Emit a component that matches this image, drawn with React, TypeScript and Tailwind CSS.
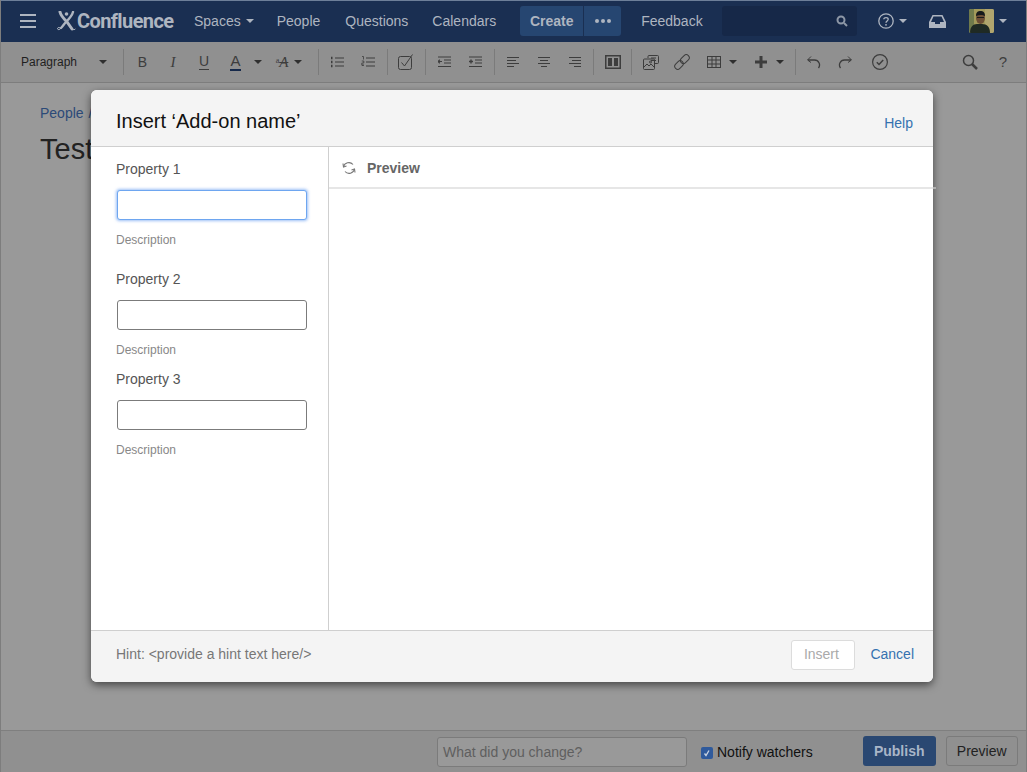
import type { ReactNode } from 'react';

const Caret = ({ className = 'border-t-[#2f2f2f]' }: { className?: string }) => (
  <span className={`inline-block h-0 w-0 border-x-[4px] border-t-[4px] border-x-transparent ${className}`} />
);

const Sep = () => <span className="h-[26px] w-px shrink-0 bg-[#7b7b7b]" />;

// fixed-width toolbar slot, icon centred
const Slot = ({ w, children }: { w: string; children: ReactNode }) => (
  <span className={`flex shrink-0 items-center justify-center ${w}`}>{children}</span>
);

const Ico = ({ children, w = 16, h = 16 }: { children: ReactNode; w?: number; h?: number }) => (
  <svg width={w} height={h} viewBox={`0 0 ${w} ${h}`} fill="none" stroke="#3d3d3d" strokeWidth="1">
    {children}
  </svg>
);

const Lines = ({ rows }: { rows: [number, number][] }) => (
  <Ico w={14} h={12}>
    {rows.map(([a, b], i) => (
      <path key={i} d={`M${a} ${1.5 + i * 3}H${b}`} />
    ))}
  </Ico>
);

function Logo() {
  return (
    <svg width="19" height="20" viewBox="0 0 19 20" fill="none" stroke="#aeb5c0" strokeLinecap="round">
      <path d="M3 1c1 4 4 7 7 10l5 7" strokeWidth="3" />
      <path d="M16 1c-1 4-4 7-7 10-2 2-3 4-5 6" strokeWidth="2.4" />
      <circle cx="9.5" cy="3" r="1.8" fill="#aeb5c0" stroke="none" />
      <path d="M4 17c-1 2-3 2-3.500 1s1-2 2-1.500M15 18c1 1 3 1 3.500 0" strokeWidth="1" />
    </svg>
  );
}

function Avatar() {
  return (
    <svg width="25" height="24" viewBox="0 0 25 24" className="rounded-[2px]">
      <rect width="25" height="24" fill="#a39a5a" />
      <rect x="16" width="9" height="24" fill="#b0a56e" />
      <rect width="5" height="24" fill="#6f7a4c" />
      <path d="M1 24c0-6 3-9 7-9h5c5 0 8 3 8 9z" fill="#1f2a24" />
      <ellipse cx="11.500" cy="9" rx="4.500" ry="6" fill="#6d4f36" />
      <path d="M7 7c0-4 2-5 4.500-5S16 3 16 7c-2-1.500-6-1.500-9 0z" fill="#16191c" />
      <path d="M8 8.500h7" stroke="#1c1c1c" strokeWidth="1" />
    </svg>
  );
}

function TopNav() {
  return (
    <div className="flex h-[42px] shrink-0 items-center border-t border-t-[#6d7f99] bg-[#1a2f52] pb-[1px] text-[14px] text-[#aeb5c0]">
      <span className="ml-[19px] flex w-[16px] flex-col gap-[4px]">
        <span className="h-[2px] bg-[#aeb5c0]" />
        <span className="h-[2px] bg-[#aeb5c0]" />
        <span className="h-[2px] bg-[#aeb5c0]" />
      </span>
      <span className="ml-[21px] flex items-center">
        <Logo />
        <span className="ml-[1px] w-[98px] font-['Roboto',sans-serif] text-[20px] font-bold leading-none tracking-[-0.6px]">Confluence</span>
      </span>
      <span className="ml-[19px] flex items-center gap-[5px]">
        Spaces <Caret className="border-t-[#aeb5c0]" />
      </span>
      <span className="ml-[23px]">People</span>
      <span className="ml-[25px]">Questions</span>
      <span className="ml-[24px]">Calendars</span>
      <span className="ml-[24px] flex h-[30px] items-stretch overflow-hidden rounded-[3px] bg-[#264671]">
        <span className="flex w-[64px] items-center justify-center border-r border-r-[#1a2f52] font-semibold">Create</span>
        <span className="flex w-[37px] items-center justify-center gap-[2px]">
          <span className="h-[4px] w-[4px] rounded-full bg-[#aeb5c0]" />
          <span className="h-[4px] w-[4px] rounded-full bg-[#aeb5c0]" />
          <span className="h-[4px] w-[4px] rounded-full bg-[#aeb5c0]" />
        </span>
      </span>
      <span className="ml-[20px]">Feedback</span>
      <span className="ml-[19px] flex h-[30px] w-[135px] items-center justify-end rounded-[3px] bg-[#162848] pr-[9px]">
        <svg width="12" height="12" viewBox="0 0 12 12" fill="none" stroke="#8d97a6" strokeWidth="2">
          <circle cx="5" cy="5" r="3.500" />
          <path d="M8 8l3 3" />
        </svg>
      </span>
      <span className="ml-[21px] flex items-center gap-[5px]">
        <svg width="16" height="16" viewBox="0 0 16 16" fill="none" stroke="#aeb5c0" strokeWidth="1.300">
          <circle cx="8" cy="8" r="7.200" />
          <path d="M5.800 6.300C5.800 4 10.200 4 10.200 6.300c0 1.700-2.200 1.600-2.200 3.400" />
          <circle cx="8" cy="11.800" r=".9" fill="#aeb5c0" stroke="none" />
        </svg>
        <Caret className="border-t-[#aeb5c0]" />
      </span>
      <span className="ml-[22px] flex">
        <svg width="17" height="13" viewBox="0 0 17 13">
          <path d="M3.500 0h10L17 7v6H0V7zM4.500 1.500 2 7h4v2h5V7h4l-2.500-5.500z" fill="#aeb5c0" fillRule="evenodd" />
        </svg>
      </span>
      <span className="ml-[23px] flex items-center gap-[5px]">
        <Avatar />
        <Caret className="border-t-[#aeb5c0]" />
      </span>
    </div>
  );
}

function Toolbar() {
  return (
    <div className="flex h-[41px] shrink-0 items-center border-b border-b-[#7d7d7d] bg-[#909090] text-[#3d3d3d]">
      <span className="ml-[20px] w-[76px] text-[12px] text-[#1f1f1f]">Paragraph</span>
      <Slot w="w-[12px]"><Caret /></Slot>
      <span className="w-[14px]" />
      <Sep />
      <span className="w-[3px]" />
      <Slot w="w-[31px]"><span className="text-[14px]">B</span></Slot>
      <Slot w="w-[30px]"><span className="font-['Liberation_Serif',serif] text-[15px] italic">I</span></Slot>
      <Slot w="w-[32px]"><span className="border-b border-b-[#3d3d3d] text-[14px] leading-[15px]">U</span></Slot>
      <Slot w="w-[31px]"><span className="border-b-[2px] border-b-[#16294a] text-[15px] leading-[16px]">A</span></Slot>
      <Slot w="w-[14px]"><Caret /></Slot>
      <Slot w="w-[30px]">
        <span className="relative left-[2px] font-['Liberation_Serif',serif] text-[15px] italic"><sup className="text-[8px] not-italic">a</sup><span className="line-through">A</span></span>
      </Slot>
      <Slot w="w-[5px]"><Caret /></Slot>
      <span className="w-[18px]" />
      <Sep />
      <Slot w="w-[36px]">
        <Ico w={14} h={12}>
          <path d="M5 2h9M5 6h9M5 10h9" />
          <path d="M1 2h1.500M1 6h1.500M1 10h1.500" strokeWidth="2.400" />
        </Ico>
      </Slot>
      <Slot w="w-[26px]">
        <Ico w={14} h={12}>
          <path d="M5 2h9M5 6h9M5 10h9" />
          <path d="M1 .5h1.500v3M.8 5h2v2h-2v2h2.200M.8 9.500h2" strokeWidth=".8" />
        </Ico>
      </Slot>
      <span className="w-[6px]" />
      <Sep />
      <Slot w="w-[36px]">
        <Ico>
          <rect x=".5" y="2.500" width="13" height="13" rx="2" />
          <path d="M3.500 8.500l3 3.500L14.500.5" />
        </Ico>
      </Slot>
      <span className="w-[1px]" />
      <Sep />
      <span className="w-[3px]" />
      <Slot w="w-[31px]">
        <Ico w={13} h={12}>
          <path d="M0 1h13M6 4h7M6 7h7M0 10.500h13" />
          <path d="M0 5.500h4M1.800 3.800 0 5.500l1.800 1.700" strokeWidth="1.200" />
        </Ico>
      </Slot>
      <Slot w="w-[31px]">
        <Ico w={13} h={12}>
          <path d="M0 1h13M6 4h7M6 7h7M0 10.500h13" />
          <path d="M0 5.500h4M2 3.500v4" strokeWidth="1.400" />
        </Ico>
      </Slot>
      <span className="w-[3px]" />
      <Sep />
      <span className="w-[2px]" />
      <Slot w="w-[31px]"><Lines rows={[[1, 13], [1, 10], [1, 13], [1, 8]]} /></Slot>
      <Slot w="w-[31px]"><Lines rows={[[1, 13], [3, 11], [1, 13], [4, 10]]} /></Slot>
      <Slot w="w-[31px]"><Lines rows={[[1, 13], [4, 13], [1, 13], [6, 13]]} /></Slot>
      <span className="w-[3px]" />
      <Sep />
      <Slot w="w-[37px]">
        <svg width="16" height="14" viewBox="0 0 16 14">
          <rect x=".75" y=".75" width="14.500" height="12.500" fill="none" stroke="#3d3d3d" strokeWidth="1.500" />
          <rect x="3" y="3" width="4" height="8" fill="#3d3d3d" />
          <rect x="9" y="3" width="4" height="8" fill="#3d3d3d" />
        </svg>
      </Slot>
      <Sep />
      <Slot w="w-[38px]">
        <Ico w={16} h={16}>
          <path d="M5 4V2.500a1 1 0 0 1 1-1h8.500a1 1 0 0 1 1 1v6a1 1 0 0 1-1 1H12M8 4h5M8 6.500h5" />
          <rect x=".5" y="5" width="11" height="10.500" rx="1" />
          <path d="M1 13l3-3 2 2 2-2 3 3" />
          <circle cx="7.500" cy="8" r="1" />
        </Ico>
      </Slot>
      <Slot w="w-[24px]">
        <Ico>
          <g transform="rotate(-45 8 8)">
            <rect x="-1" y="5" width="9.500" height="6" rx="3" />
            <rect x="7" y="5" width="10" height="6" rx="3" />
          </g>
        </Ico>
      </Slot>
      <span className="w-[2px]" />
      <Slot w="w-[35px]">
        <Ico w={14} h={12}>
          <rect x=".5" y=".5" width="13" height="11" />
          <path d="M.5 4h13M.5 8h13M5 .5v11M9 .5v11" />
        </Ico>
      </Slot>
      <span className="w-[2px]" />
      <Slot w="w-[0px]"><Caret /></Slot>
      <span className="w-[13px]" />
      <Slot w="w-[30px]">
        <svg width="12" height="12" viewBox="0 0 12 12"><path d="M4.500 0h3v4.500H12v3H7.500V12h-3V7.500H0v-3h4.500z" fill="#3d3d3d" /></svg>
      </Slot>
      <Slot w="w-[8px]"><Caret /></Slot>
      <span className="w-[11px]" />
      <Sep />
      <Slot w="w-[35px]">
        <Ico w={15} h={14}>
          <path d="M5 1.500L1.500 5 5 7.500" />
          <path d="M2 5h6.500a5 5 0 0 1 4 8" strokeWidth="1.300" />
        </Ico>
      </Slot>
      <span className="w-[2px]" />
      <Slot w="w-[25px]">
        <Ico w={15} h={14}>
          <path d="M10 1.500L13.500 5 10 7.500" />
          <path d="M13 5H6.500a5 5 0 0 0-4 8" strokeWidth="1.300" />
        </Ico>
      </Slot>
      <span className="w-[9px]" />
      <Slot w="w-[25px]">
        <Ico>
          <circle cx="8" cy="8" r="7.400" strokeWidth="1.200" />
          <path d="M4.800 8.300l2.200 2.200 4.200-4.500" strokeWidth="1.500" />
        </Ico>
      </Slot>
      <span className="w-[63px]" />
      <Slot w="w-[30px]">
        <Ico>
          <circle cx="6.500" cy="6.500" r="5" strokeWidth="1.500" />
          <path d="M10 10l5 5" strokeWidth="2.500" />
        </Ico>
      </Slot>
      <Slot w="w-[36px]"><span className="text-[15px]">?</span></Slot>
    </div>
  );
}

function Property({ label, focused, mt }: { label: string; focused?: boolean; mt: string }) {
  return (
    <div className={mt}>
      <div className="text-[14px] leading-[20px] text-[#555]">{label}</div>
      <div
        className={
          focused
            ? 'mt-[11px] ml-[1px] h-[30px] w-[190px] rounded-[3px] border border-[#6ea6f0] bg-white shadow-[0_0_3px_1px_rgba(90,150,240,0.6)]'
            : 'mt-[11px] ml-[1px] h-[30px] w-[190px] rounded-[3px] border border-[#7b7b7b] bg-white'
        }
      />
      <div className="mt-[11px] text-[12px] leading-[18px] text-[#888]">Description</div>
    </div>
  );
}

function Dialog() {
  return (
    <div className="absolute left-[90px] top-[90px] flex h-[592px] w-[842px] flex-col rounded-[6px] bg-white shadow-[0_3px_8px_rgba(0,0,0,0.55)]">
      <div className="flex h-[57px] shrink-0 items-center justify-between rounded-t-[6px] border-b border-b-[#cfcfcf] bg-[#f4f4f4] pl-[25px] pr-[20px]">
        <h2 className="relative top-[3px] text-[20px] text-[#111]">Insert ‘Add-on name’</h2>
        <a className="relative top-[5px] text-[14px] text-[#3572b0]">Help</a>
      </div>
      <div className="flex min-h-0 flex-1">
        <div className="w-[238px] shrink-0 border-r border-r-[#cfcfcf] pl-[25px] pt-[12px]">
          <Property label="Property 1" focused mt="mt-0" />
          <Property label="Property 2" mt="mt-[20px]" />
          <Property label="Property 3" mt="mt-[10px]" />
        </div>
        <div className="flex-1">
          <div className="relative flex h-[42px] items-center border-b-2 border-b-[#e6e6e6] pl-[13px] pt-[2px]">
            <svg width="14" height="14" viewBox="0 0 14 14" fill="none" stroke="#777" strokeWidth="1.100">
              <path d="M1.500 6A5.500 5.500 0 0 1 11 3.500M12.500 8A5.500 5.500 0 0 1 3 10.500" />
              <path d="M1 2.500l.5 3.500 3-1M13 11.500 12.500 8l-3 1" />
            </svg>
            <span className="ml-[11px] text-[14px] font-bold text-[#666]">Preview</span>
            <span className="absolute -bottom-[2px] -right-[3px] h-[2px] w-[3px] bg-[#b0b0b0]" />
          </div>
        </div>
      </div>
      <div className="flex h-[52px] shrink-0 items-center justify-between rounded-b-[6px] border-t border-t-[#cfcfcf] bg-[#f4f4f4] pl-[25px] pr-[19px]">
        <span className="relative top-[-2px] text-[14px] text-[#777]">Hint: &lt;provide a hint text here/&gt;</span>
        <div className="relative top-[-2px] flex items-center">
          <button className="flex h-[30px] w-[64px] items-center justify-center rounded-[3px] border border-[#dcdcdc] bg-white pr-[4px] text-[14px] text-[#aaa]">Insert</button>
          <a className="relative ml-[15px] text-[14px] text-[#3572b0]">Cancel</a>
        </div>
      </div>
    </div>
  );
}

export default function App() {
  return (
    <div className="relative flex h-[772px] w-[1027px] flex-col overflow-hidden border-x border-x-[#7d7d7d] bg-[#999] font-['Liberation_Sans',Arial,sans-serif]">
      <TopNav />
      <Toolbar />
      <div className="min-h-0 flex-1 pl-[39px] pt-[20px]">
        <div className="flex gap-[5px] text-[14px] leading-[20px] text-[#2c4a78]">People <span>/</span></div>
        <h1 className="mt-[8px] text-[29px] leading-[36px] text-[#222]">Test</h1>
      </div>
      <div className="flex h-[42px] shrink-0 items-center border-t border-t-[#7f7f7f] bg-[#909090] text-[14px]">
        <div className="ml-[436px] flex h-[30px] w-[250px] items-center rounded-[3px] border border-[#7b7b7b] bg-[#999] pl-[5px] pt-[2px] text-[#5f5f5f]">What did you change?</div>
        <span className="relative top-[1px] ml-[14px] flex h-[12px] w-[12px] items-center justify-center rounded-[2px] bg-[#2f5a9c]">
          <svg width="8" height="8" viewBox="0 0 8 8" fill="none" stroke="#c9d3e2" strokeWidth="1.300"><path d="M1.500 4.500l1.500 2 3-5" /></svg>
        </span>
        <span className="relative top-[1px] ml-[4px] text-[#111]">Notify watchers</span>
        <button className="relative top-[-1px] ml-[50px] h-[30px] w-[73px] rounded-[3px] bg-[#2a4872] pt-[2px] text-[14px] font-bold text-[#a9b6c8]">Publish</button>
        <button className="relative top-[-1px] ml-[10px] h-[30px] w-[72px] rounded-[3px] border border-[#7b7b7b] pt-[2px] text-[14px] text-[#222]">Preview</button>
      </div>
      <Dialog />
    </div>
  );
}
